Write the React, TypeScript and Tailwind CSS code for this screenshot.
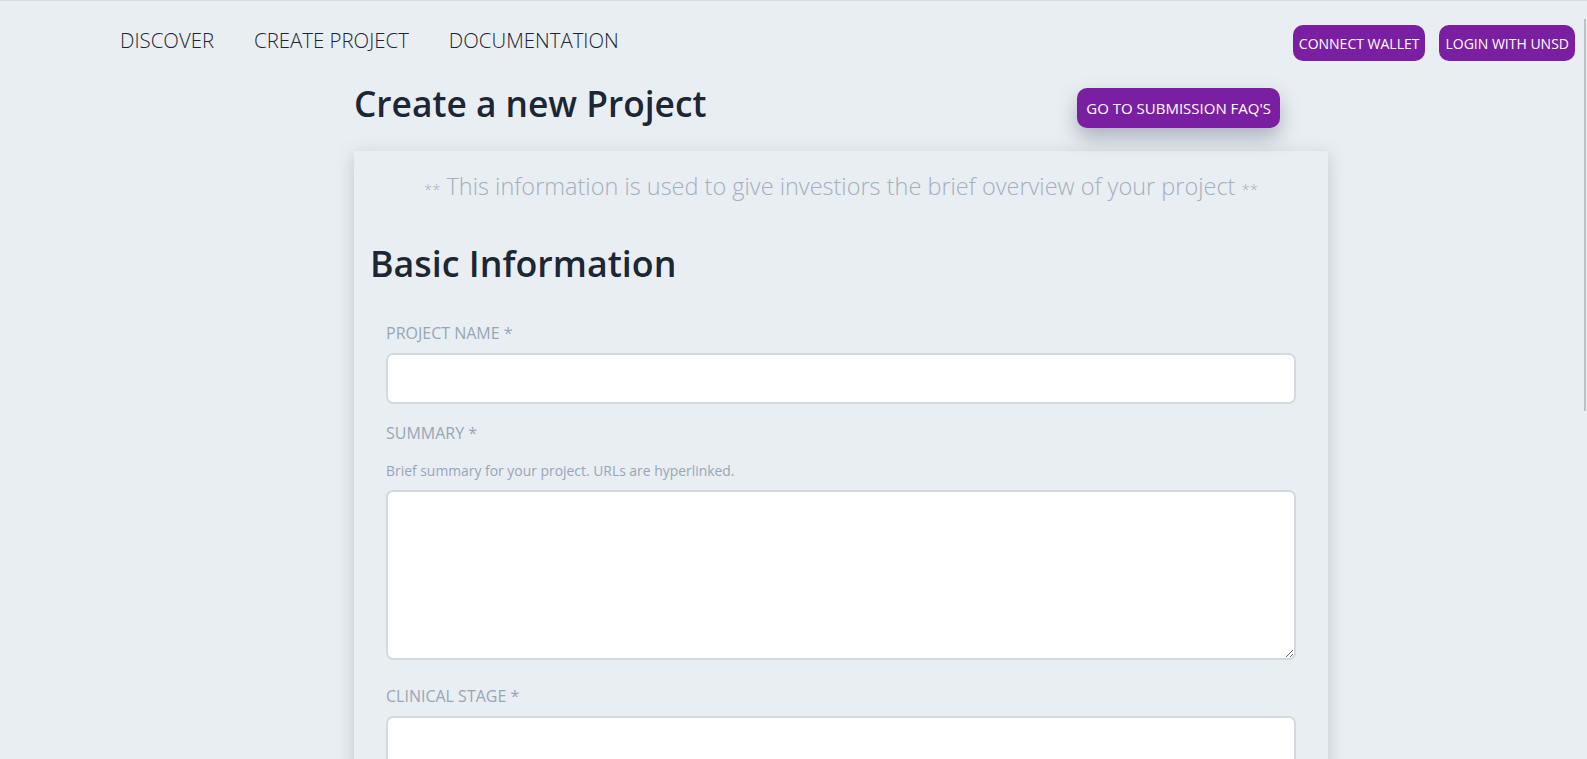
import React from "react";

const Field: React.FC<{ label: string; hint?: string; tall?: boolean }> = ({ label, hint, tall }) => (
    <div className="flex flex-col">
        <label className="text-[16px] text-[#97a6b6] leading-[20px]">{label}</label>
        {hint && <p className="mt-[20px] text-[13.9px] text-[#97a6b6] leading-[16px]">{hint}</p>}
        {tall ? (
            <textarea className="mb-[7px] mt-[11px] h-[170px] w-full rounded-[7px] border-2 border-[#d3d9df] bg-white outline-none" />
        ) : (
            <input className="mt-[10px] h-[51px] w-full rounded-[7px] border-2 border-[#d3d9df] bg-white outline-none" />
        )}
    </div>
);

export default function App() {
    return (
        <div
            className="relative min-h-[759px] overflow-hidden bg-[#e9eef2] border-t border-[#d5dbe0] text-[#1c2634]"
            style={{ fontFamily: '"Open Sans", "Noto Sans", sans-serif' }}
        >
            <nav className="flex items-start justify-between pl-[120px] pr-[12px] pt-[24px]">
                <div className="flex gap-[40px] text-[20.4px] font-light text-[#1b2532]">
                    <a>DISCOVER</a>
                    <a>CREATE PROJECT</a>
                    <a>DOCUMENTATION</a>
                </div>
                <div className="flex gap-[14px]">
                    <button className="h-[36px] rounded-[10px] bg-[#7b1fa2] px-[6px] text-[14px] text-white">
                        CONNECT WALLET
                    </button>
                    <button className="h-[36px] rounded-[10px] bg-[#7b1fa2] px-[6px] text-[14px] text-white">
                        LOGIN WITH UNSD
                    </button>
                </div>
            </nav>

            <main className="ml-[354px] w-[974px]">
                <div className="flex items-start justify-between pr-[48px] pt-[20px]">
                    <h1 className="text-[35.3px] font-semibold leading-[44px]">Create a new Project</h1>
                    <button className="mt-[7px] h-[40px] rounded-[10px] bg-[#7b1fa2] px-[9px] text-[15px] text-white shadow-[0_10px_20px_rgba(60,70,90,0.35)]">
                        GO TO SUBMISSION FAQ'S
                    </button>
                </div>

                <section className="mt-[23px] bg-[#e9eef2] pb-[40px] shadow-[0_4px_16px_rgba(90,100,120,0.28)]">
                    <p className="pt-[19px] text-center text-[23.5px] font-light text-[#a3afbd] leading-[32px]">
                        <span className="text-[15px]">**</span> This information is used to give investiors the brief overview of your project <span className="text-[15px]">**</span>
                    </p>
                    <h2 className="mt-[36px] px-[16px] text-[35.8px] font-semibold leading-[44px]">Basic Information</h2>
                    <div className="mt-[38px] flex flex-col gap-[19px] px-[32px]">
                        <Field label="PROJECT NAME *" />
                        <Field label="SUMMARY *" hint="Brief summary for your project. URLs are hyperlinked." tall />
                        <Field label="CLINICAL STAGE *" />
                    </div>
                </section>
            </main>

            <div className="absolute right-[1px] top-[18px] h-[392px] w-[2px] bg-[#bcc2c8]" />
            <div className="absolute bottom-0 left-[48px] right-0 h-px bg-[#222]" />
        </div>
    );
}
